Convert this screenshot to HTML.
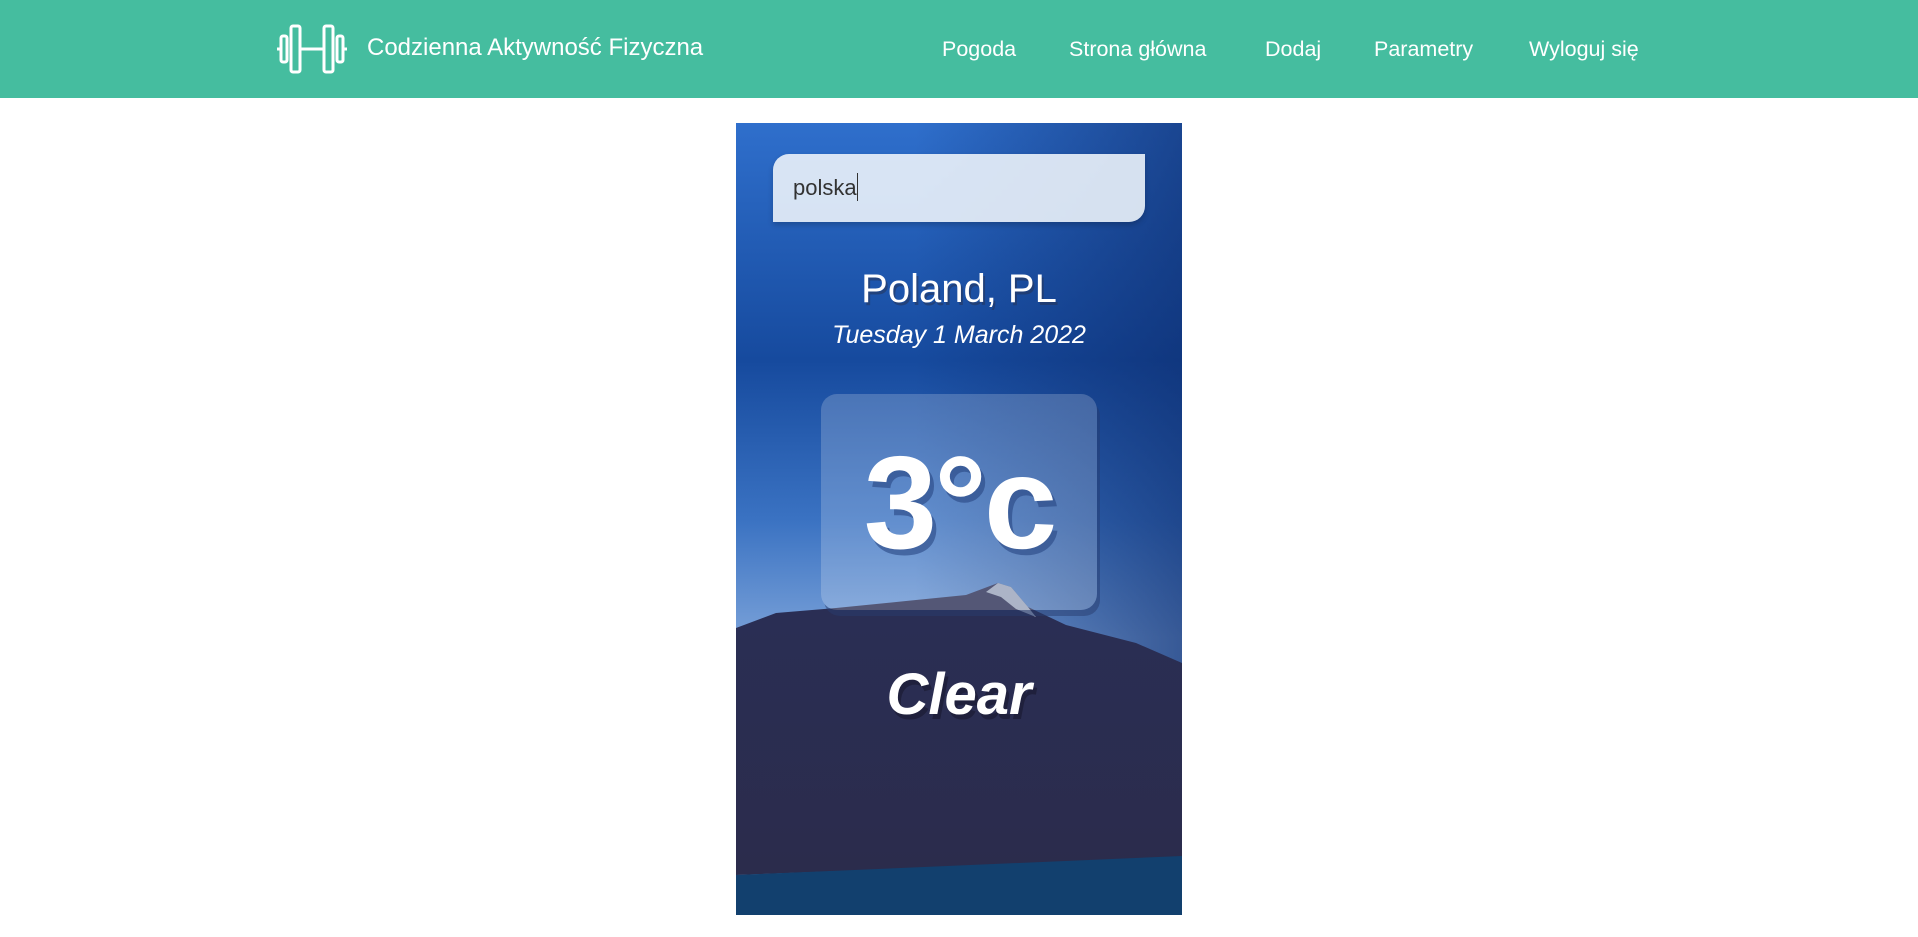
<!DOCTYPE html>
<html><head><meta charset="utf-8"><style>
*{margin:0;padding:0;box-sizing:border-box}
body{width:1918px;height:937px;background:#fff;font-family:"Liberation Sans",sans-serif;position:relative;overflow:hidden}
header{position:absolute;left:0;top:0;width:1918px;height:98px;background:#45bd9f}
.logo{position:absolute;left:277px;top:24px}
.title{position:absolute;left:367px;top:34px;color:#fff;font-size:24px}
.nav{position:absolute;top:37px;color:#fff;font-size:21.5px}
.card{position:absolute;left:736px;top:123px;width:446px;height:792px;overflow:hidden}
.search{position:absolute;left:37px;top:31px;width:372px;height:68px;background:rgba(235,242,250,.9);border-radius:16px 0 16px 0;box-shadow:0 3px 6px rgba(0,0,0,.2)}
.search span{position:absolute;left:20px;top:21px;font-size:22px;color:#333}
.search i{position:absolute;left:84px;top:19px;width:1px;height:28px;background:#333}
.loc{position:absolute;left:0;width:446px;text-align:center;color:#fff;text-shadow:2px 3px rgba(40,50,80,.5)}
.tbox{position:absolute;left:85px;top:271px;width:276px;height:216px;background:rgba(255,255,255,.2);border-radius:16px;box-shadow:3px 6px rgba(40,60,110,.5)}
</style></head><body>
<header>
<svg class="logo" width="70" height="50" viewBox="0 0 70 50" fill="none" stroke="#fff" stroke-width="3">
<rect x="4" y="12" width="6" height="26" rx="2"/><rect x="14" y="2" width="9" height="46" rx="2"/>
<rect x="47" y="2" width="9" height="46" rx="2"/><rect x="60" y="12" width="6" height="26" rx="2"/>
<path d="M23 25H47M0 25H4M66 25H70"/></svg>
<div class="title">Codzienna Aktywność Fizyczna</div>
<div class="nav" style="left:942px">Pogoda</div>
<div class="nav" style="left:1069px">Strona główna</div>
<div class="nav" style="left:1265px">Dodaj</div>
<div class="nav" style="left:1374px">Parametry</div>
<div class="nav" style="left:1529px">Wyloguj się</div>
</header>
<div class="card">
<svg width="446" height="792" style="position:absolute;left:0;top:0">
<defs>
<linearGradient id="sky" x1="0" y1="0" x2="0" y2="1">
<stop offset="0" stop-color="#2f6fcc"/><stop offset=".3" stop-color="#164a9e"/><stop offset=".5" stop-color="#3a72c2"/><stop offset=".65" stop-color="#78a0d8"/><stop offset="1" stop-color="#6f9ad3"/></linearGradient>
<linearGradient id="sky2" x1="1" y1="0" x2="0" y2="0">
<stop offset="0" stop-color="#0c2a6a" stop-opacity=".6"/><stop offset=".6" stop-color="#0c2a6a" stop-opacity="0"/></linearGradient>
<linearGradient id="mt" x1="0" y1="0" x2="0" y2="1">
<stop offset="0" stop-color="#2a2e55"/><stop offset="1" stop-color="#2b2c4c"/></linearGradient>
</defs>
<rect width="446" height="792" fill="url(#sky)"/>
<rect width="446" height="792" fill="url(#sky2)"/>
<polygon points="0,505 40,490 100,485 170,478 230,472 262,460 275,464 292,484 330,502 400,520 446,540 446,735 0,752" fill="url(#mt)"/>
<polygon points="250,469 262,460 275,464 292,484 300,494 280,486 265,474" fill="#c8d4e6" opacity=".7"/>
<polygon points="0,752 446,733 446,792 0,792" fill="#12406e"/>
</svg>
<div class="search"><span>polska</span><i></i></div>
<div class="loc" style="top:144px;font-size:40px">Poland, PL</div>
<div class="loc" style="top:198px;font-size:25px;font-style:italic;text-shadow:none">Tuesday 1 March 2022</div>
<div class="tbox"></div>
<div class="loc" style="top:304px;font-size:132px;font-weight:bold;letter-spacing:-3px;text-shadow:4px 6px rgba(40,70,130,.6)">3°c</div>
<div class="loc" style="top:538px;font-size:58px;font-weight:bold;font-style:italic;text-shadow:3px 5px rgba(20,20,40,.5)">Clear</div>
</div>
</body></html>
